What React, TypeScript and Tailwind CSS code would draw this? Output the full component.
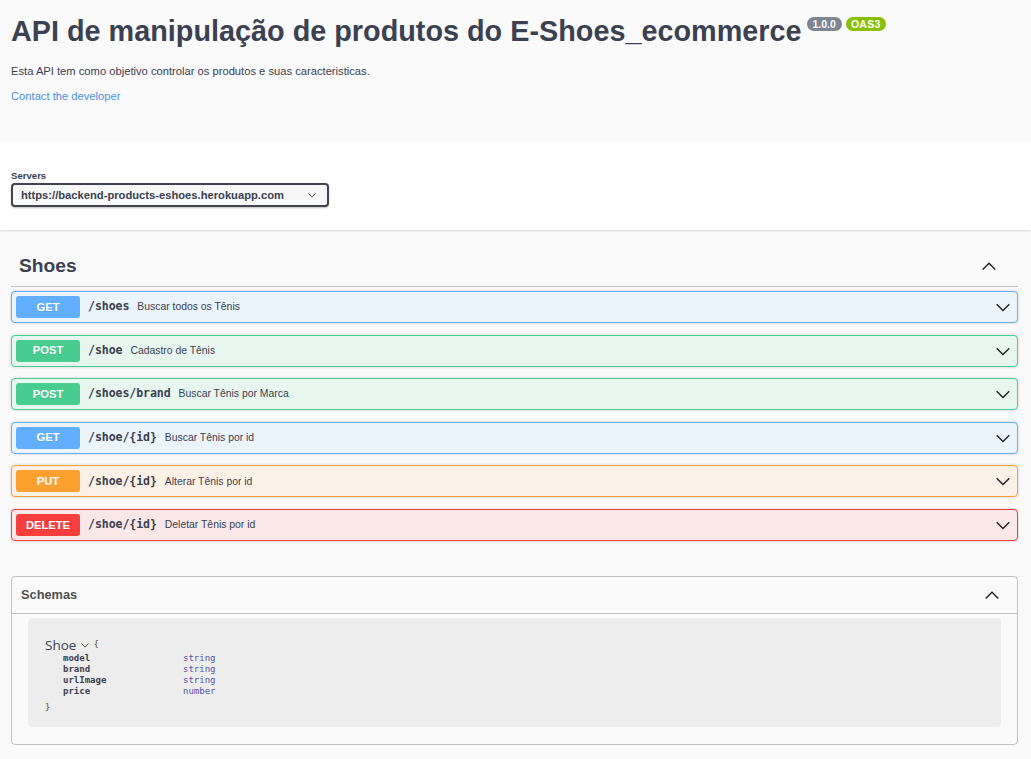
import React from 'react';

type Method = 'GET' | 'POST' | 'PUT' | 'DELETE';

interface Operation {
  method: Method;
  path: string;
  summary: string;
}

const operations: Operation[] = [
  { method: 'GET', path: '/shoes', summary: 'Buscar todos os Tênis' },
  { method: 'POST', path: '/shoe', summary: 'Cadastro de Tênis' },
  { method: 'POST', path: '/shoes/brand', summary: 'Buscar Tênis por Marca' },
  { method: 'GET', path: '/shoe/{id}', summary: 'Buscar Tênis por id' },
  { method: 'PUT', path: '/shoe/{id}', summary: 'Alterar Tênis por id' },
  { method: 'DELETE', path: '/shoe/{id}', summary: 'Deletar Tênis por id' },
];

const methodStyles: Record<Method, { block: string; badge: string }> = {
  GET: { block: 'bg-[#ebf3fb] border-[#61affe]', badge: 'bg-[#61affe]' },
  POST: { block: 'bg-[#e8f6f0] border-[#49cc90]', badge: 'bg-[#49cc90]' },
  PUT: { block: 'bg-[#fbf1e6] border-[#fca130]', badge: 'bg-[#fca130]' },
  DELETE: { block: 'bg-[#fae7e7] border-[#f93e3e]', badge: 'bg-[#f93e3e]' },
};

const schemaFields = [
  { name: 'model', type: 'string' },
  { name: 'brand', type: 'string' },
  { name: 'urlImage', type: 'string' },
  { name: 'price', type: 'number' },
];

const Chevron: React.FC<{ up?: boolean; className?: string }> = ({ up = false, className = '' }) => (
  <svg viewBox="0 0 20 20" className={className} fill="none" stroke="currentColor" strokeWidth={1.6}>
    {up ? <path d="M3 14 L10 7 L17 14" /> : <path d="M3 7 L10 14 L17 7" />}
  </svg>
);

const OperationRow: React.FC<{ op: Operation }> = ({ op }) => {
  const style = methodStyles[op.method];
  return (
    <div className={`flex items-center h-[32px] border rounded-[4px] p-[4px] shadow-[0_0_3px_rgba(0,0,0,0.19)] ${style.block}`}>
      <span
        className={`w-[64px] h-[22px] shrink-0 rounded-[3px] flex items-center justify-center text-white font-bold text-[11.2px] [text-shadow:0_1px_0_rgba(0,0,0,0.1)] ${style.badge}`}
      >
        {op.method}
      </span>
      <span className="ml-[8px] font-['DejaVu_Sans_Mono',monospace] font-semibold text-[11.6px] text-[#3b4151] tracking-[-0.1px]">
        {op.path}
      </span>
      <span className="ml-[8px] text-[10.4px] text-[#3b4151]">{op.summary}</span>
      <Chevron className="ml-auto mr-[1px] w-[18px] h-[18px] text-[#222]" />
    </div>
  );
};

export default function App() {
  return (
    <div className="min-h-[759px] bg-[#fafafa] font-['Liberation_Sans',Arial,sans-serif] text-[#3b4151]">
      {/* Info */}
      <div className="pl-[11px] pr-[13px] pt-[17px] h-[142px]">
        <div className="flex items-start">
          <h2 className="text-[28.8px] leading-[29px] font-bold text-[#3b4151]">
            API de manipulação de produtos do E-Shoes_ecommerce
          </h2>
          <span className="ml-[5px] h-[14px] px-[6px] rounded-full bg-[#7d8492] text-white text-[10.5px] font-bold leading-[14px]">
            1.0.0
          </span>
          <span className="ml-[4px] h-[14px] px-[5px] rounded-full bg-[#89bf04] text-white text-[10.5px] font-bold leading-[14px] tracking-[0.3px]">
            OAS3
          </span>
        </div>
        <p className="mt-[18px] text-[11.2px] leading-[14px]">
          Esta API tem como objetivo controlar os produtos e suas caracteristicas.
        </p>
        <a className="block mt-[11px] text-[11.2px] leading-[14px] text-[#4990e2]">Contact the developer</a>
      </div>

      {/* Servers */}
      <div className="bg-white h-[88px] pl-[11px] pt-[28px] shadow-[0_1px_2px_0_rgba(0,0,0,0.15)]">
        <div className="text-[9.6px] font-bold leading-[12px]">Servers</div>
        <div className="mt-[1px] w-[318px] h-[24px] flex items-center justify-between border-2 border-[#41444e] rounded-[4px] bg-[#f7f7f7] pl-[8px] pr-[10px] shadow-[0_1px_2px_0_rgba(0,0,0,0.25)]">
          <span className="text-[11.2px] font-bold">https://backend-products-eshoes.herokuapp.com</span>
          <Chevron className="w-[10px] h-[10px] text-[#222]" />
        </div>
      </div>

      {/* Tag section */}
      <div className="pl-[11px] pr-[13px] pt-[15px]">
        <div className="flex items-center h-[42px] pl-[8px] pr-[20px] border-b border-[#3b4151]/30">
          <h3 className="mt-[2px] text-[19.2px] font-bold">Shoes</h3>
          <Chevron up className="ml-auto w-[18px] h-[18px] text-[#222]" />
        </div>
        <div className="mt-[4px] flex flex-col gap-[11.6px]">
          {operations.map((op, i) => (
            <OperationRow key={i} op={op} />
          ))}
        </div>

        {/* Schemas */}
        <div className="mt-[35px] mb-[14px] border border-[#3b4151]/30 rounded-[4px]">
          <div className="flex items-center h-[37px] pl-[9px] pr-[16px] border-b border-[#3b4151]/30">
            <h4 className="text-[12.8px] font-bold text-[#505050]">Schemas</h4>
            <Chevron up className="ml-auto w-[18px] h-[18px] text-[#222]" />
          </div>
          <div className="mx-[16px] mt-[4px] mb-[17px] h-[109px] rounded-[4px] bg-[#ededed] pl-[17px] pt-[19px]">
            <div className="flex items-center">
              <span className="font-['Open_Sans',sans-serif] text-[13.5px] leading-[16px] text-[#3b4151]">Shoe</span>
              <Chevron className="ml-[4px] w-[10px] h-[10px] text-[#222]" />
              <span className="ml-[3px] font-['DejaVu_Sans_Mono',monospace] text-[9px] text-[#6b4a2a]">{'{'}</span>
            </div>
            <div className="pl-[18px] font-['DejaVu_Sans_Mono',monospace] text-[9px] leading-[11px]">
              {schemaFields.map((f) => (
                <div key={f.name} className="flex">
                  <span className="w-[120px] font-semibold text-[#3b4151]">{f.name}</span>
                  <span className="text-[#55a]">{f.type}</span>
                </div>
              ))}
            </div>
            <div className="mt-[4px] font-['DejaVu_Sans_Mono',monospace] text-[9px] text-[#6b4a2a]">{'}'}</div>
          </div>
        </div>
      </div>
    </div>
  );
}
